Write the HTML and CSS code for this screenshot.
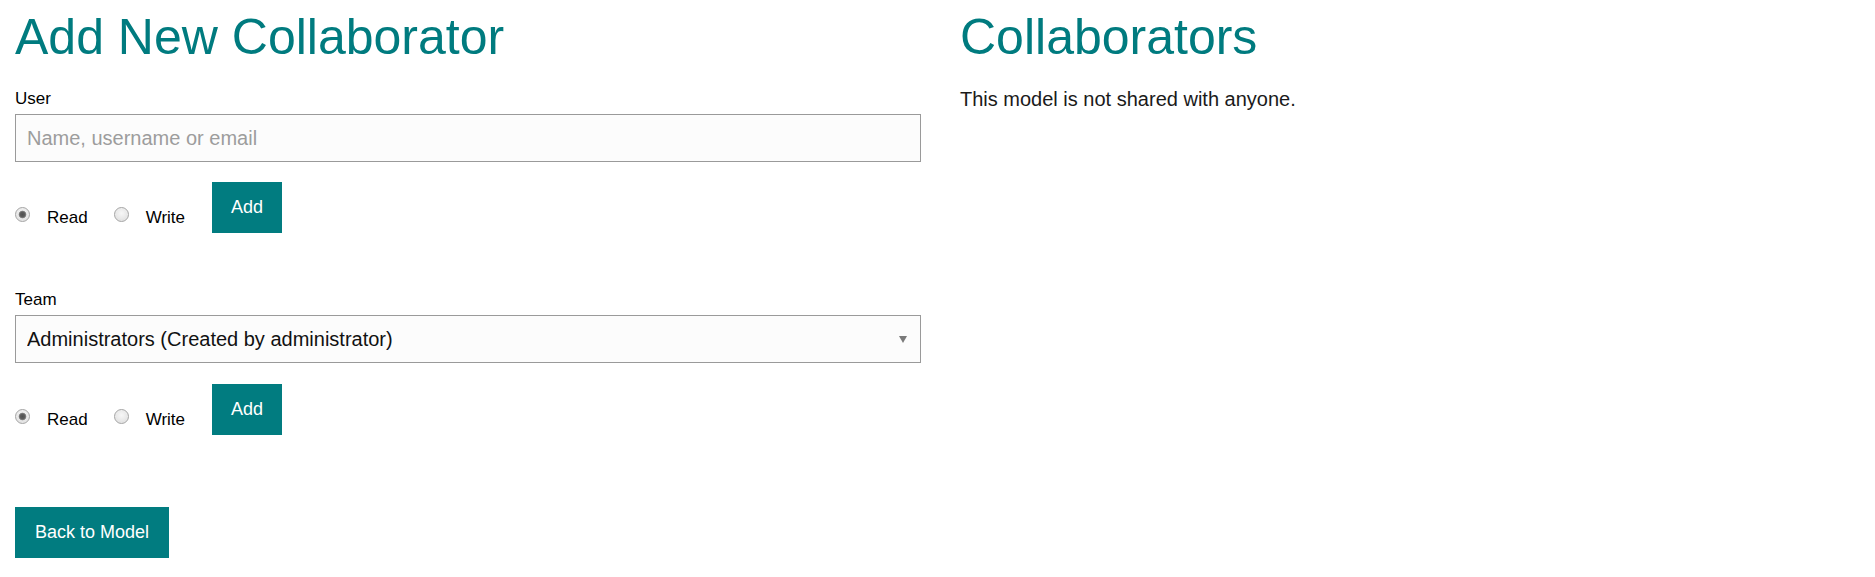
FILE: index.html
```html
<!DOCTYPE html>
<html lang="en">
<head>
<meta charset="utf-8">
<title>Collaborators</title>
<link rel="stylesheet" href="styles.css">
</head>
<body>
<div class="page">
  <section class="col col-left">
    <h1 class="title">Add New Collaborator</h1>

    <form class="share-form">
      <label class="field-label" for="user">User</label>
      <input id="user" class="text-input" type="text" placeholder="Name, username or email">
      <div class="perm-row">
        <div class="perms">
          <label class="perm"><input class="radio" type="radio" name="user-perm" checked><span>Read</span></label>
          <label class="perm"><input class="radio" type="radio" name="user-perm"><span>Write</span></label>
        </div>
        <button class="btn" type="button">Add</button>
      </div>
    </form>

    <form class="share-form team-form">
      <label class="field-label" for="team">Team</label>
      <div class="select-wrap">
        <select id="team" class="select-input">
          <option>Administrators (Created by administrator)</option>
        </select>
      </div>
      <div class="perm-row">
        <div class="perms">
          <label class="perm"><input class="radio" type="radio" name="team-perm" checked><span>Read</span></label>
          <label class="perm"><input class="radio" type="radio" name="team-perm"><span>Write</span></label>
        </div>
        <button class="btn" type="button">Add</button>
      </div>
    </form>

    <div class="back-row">
      <a class="btn" href="#">Back to Model</a>
    </div>
  </section>

  <section class="col col-right">
    <h1 class="title">Collaborators</h1>
    <p class="empty">This model is not shared with anyone.</p>
  </section>
</div>
</body>
</html>
```

FILE: styles.css
```css
* {
  box-sizing: border-box;
}

html, body {
  margin: 0;
  padding: 0;
  background: #ffffff;
}

body {
  font-family: "Liberation Sans", Arial, sans-serif;
  color: #111111;
}

.page {
  display: grid;
  grid-template-columns: 906px 1fr;
  column-gap: 39px;
  padding: 10px 15px 0 15px;
}

.col {
  display: flex;
  flex-direction: column;
  align-items: stretch;
}

.title {
  margin: 0 0 24px 0;
  font-size: 50px;
  line-height: 55px;
  font-weight: normal;
  color: #007b7f;
}

.share-form {
  display: flex;
  flex-direction: column;
  margin: 0;
}

.team-form {
  margin-top: 57px;
}

.field-label {
  display: block;
  font-size: 17px;
  line-height: 20px;
  margin-bottom: 5px;
  color: #000000;
}

.text-input,
.select-input {
  display: block;
  width: 100%;
  height: 48px;
  margin: 0;
  padding: 0 11px;
  border: 1px solid #9a9a9a;
  border-radius: 0;
  background: #fcfcfc;
  font-family: "Liberation Sans", Arial, sans-serif;
  font-size: 20px;
  color: #111111;
  outline: none;
}

.text-input::placeholder {
  color: #9d9d9d;
}

.select-wrap {
  position: relative;
}

.select-input {
  appearance: none;
  -webkit-appearance: none;
  padding-right: 36px;
}

.select-wrap::after {
  content: "";
  position: absolute;
  right: 14px;
  top: 21px;
  width: 0;
  height: 0;
  border-left: 4px solid transparent;
  border-right: 4px solid transparent;
  border-top: 7px solid #7a7a7a;
  pointer-events: none;
}

.perm-row {
  display: flex;
  align-items: flex-start;
  margin-top: 20px;
}

.team-form .perm-row {
  margin-top: 21px;
}

.perms {
  display: flex;
  gap: 26px;
  padding-top: 26px;
  margin-right: 27px;
}

.perm {
  display: flex;
  align-items: flex-start;
  font-size: 17px;
  line-height: 20px;
  color: #000000;
}

.radio {
  appearance: none;
  -webkit-appearance: none;
  flex: 0 0 auto;
  width: 15px;
  height: 15px;
  margin: -1px 17px 0 0;
  border: 1px solid #a4a4a4;
  border-radius: 50%;
  background: radial-gradient(circle at 50% 40%, #f7f7f7 0, #e8e8e8 55%, #d3d3d3 100%);
  box-shadow: inset 0 0 1px #ffffff;
}

.radio:checked {
  background:
    radial-gradient(circle at 50% 50%, #505050 0, #5e5e5e 2.5px, #8a8a8a 3.5px, rgba(0,0,0,0) 4.2px),
    radial-gradient(circle at 50% 40%, #f7f7f7 0, #e8e8e8 55%, #d3d3d3 100%);
}

.btn {
  display: inline-flex;
  align-items: center;
  justify-content: center;
  height: 51px;
  padding: 0 19px;
  margin: 0;
  border: none;
  border-radius: 0;
  background: #017c80;
  color: #ffffff;
  font-family: "Liberation Sans", Arial, sans-serif;
  font-size: 18px;
  white-space: nowrap;
  text-decoration: none;
  cursor: pointer;
}

.back-row {
  display: flex;
  margin-top: 72px;
}

.back-row .btn {
  padding: 0 20px;
  min-width: 153px;
}

.empty {
  margin: 0;
  font-size: 20px;
  line-height: 20px;
  color: #1a1a1a;
}
```
